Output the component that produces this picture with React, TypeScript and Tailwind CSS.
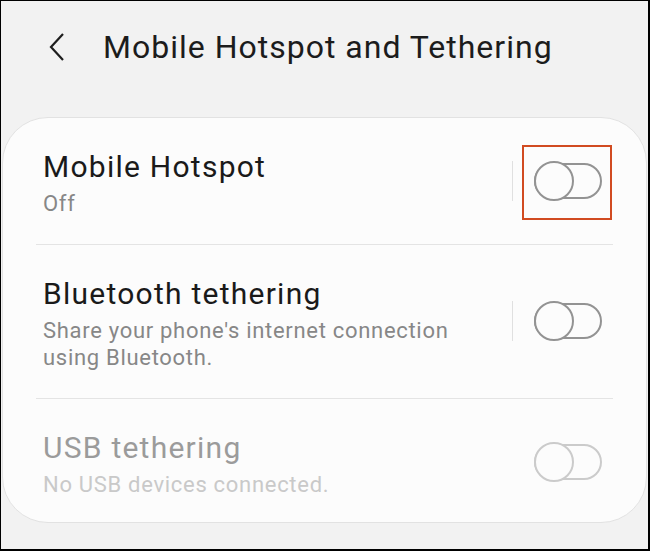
const Toggle = ({ disabled }: { disabled?: boolean }) => {
  const stroke = disabled ? "#cbcbcb" : "#939393";
  return (
    <svg width="68" height="40" viewBox="0 0 68 40" className="block">
      <rect x="1" y="3" width="66" height="34" rx="17" fill="#fcfcfc" stroke={stroke} strokeWidth="2" />
      <circle cx="20" cy="20" r="19" fill="#fcfcfc" stroke={stroke} strokeWidth="2" />
    </svg>
  );
};

type RowProps = {
  title: string;
  lines: string[];
  disabled?: boolean;
  divider?: boolean;
  highlight?: boolean;
  last?: boolean;
};

const SettingRow = ({ title, lines, disabled, divider, highlight, last }: RowProps) => {
  return (
    <div className={divider ? "border-b border-[#e4e4e4]" : ""}>
      <div className={`flex items-center pt-[31px] ${last ? "pb-[24px]" : "pb-[27px]"}`}>
        <div className="flex-1 pl-[7px]">
          <p
            className={`text-[30px] leading-[36px] tracking-[1.25px] ${
              disabled ? "text-[#9b9b9b]" : "text-[#1a1a1a]"
            }`}
          >
            {title}
          </p>
          <div
            className={`mt-[5px] text-[22px] leading-[27px] tracking-[0.7px] ${
              disabled ? "text-[#c9c9c9]" : "text-[#878787]"
            }`}
          >
            {lines.map((l) => (
              <p key={l}>{l}</p>
            ))}
          </div>
        </div>
        <div className="flex items-center pb-[5px] pr-[11px]">
          <div className={`h-10 w-[1.5px] ${disabled ? "bg-transparent" : "bg-[#e0e0e0]"}`} />
          <div className="relative ml-[21px]">
            <Toggle disabled={disabled} />
            {highlight && (
              <div className="absolute -left-[12px] -top-[16px] h-[75px] w-[90px] border-2 border-[#d14b21]" />
            )}
          </div>
        </div>
      </div>
    </div>
  );
};

export default function App() {
  return (
    <div
      className="h-[551px] w-[650px] overflow-hidden border-t border-l border-r-2 border-b-2 border-black bg-[#f2f2f2]"
      style={{ fontFamily: "Roboto, 'Liberation Sans', sans-serif" }}
    >
      <div className="flex items-center pt-[26px]">
        <svg width="20" height="30" viewBox="0 0 20 30" className="ml-[46px]">
          <path d="M16 2 L4 15 L16 28" fill="none" stroke="#1e1e1e" strokeWidth="2.2" />
        </svg>
        <h1 className="ml-[36px] text-[32px] leading-[40px] tracking-[1px] text-[#1c1c1c]">
          Mobile Hotspot and Tethering
        </h1>
      </div>

      <div className="mx-px mt-[50px] rounded-[46px] border border-[#e2e2e2] bg-[#fcfcfc] px-[33px]">
        <SettingRow title="Mobile Hotspot" lines={["Off"]} divider highlight />
        <SettingRow
          title="Bluetooth tethering"
          lines={["Share your phone's internet connection", "using Bluetooth."]}
          divider
        />
        <SettingRow title="USB tethering" lines={["No USB devices connected."]} disabled last />
      </div>
    </div>
  );
}
